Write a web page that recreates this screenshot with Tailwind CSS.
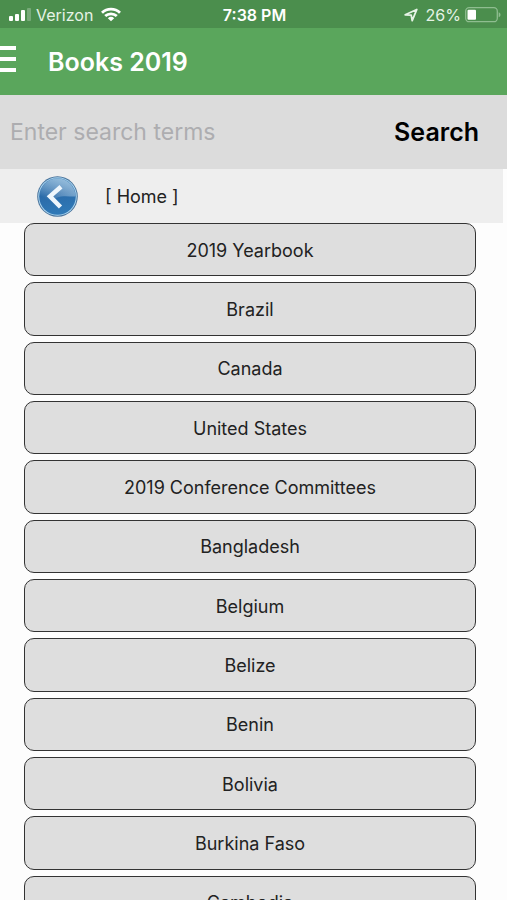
<!DOCTYPE html>
<html lang="en">
<head>
<meta charset="utf-8">
<meta name="viewport" content="width=device-width, initial-scale=1">
<title>Books 2019</title>
<script src="https://cdn.jsdelivr.net/npm/@tailwindcss/browser@4"></script>
</head>
<body class="flex h-screen flex-col overflow-hidden bg-[#fdfdfd] font-[Inter,'Liberation_Sans',sans-serif] text-[#222]">
  <div class="grid h-7 shrink-0 grid-cols-[1fr_auto_1fr] items-center bg-[#4b8e4d] pt-0.5 pl-2 pr-1.5 text-base text-[#e6f3e6]">
    <div class="flex items-center gap-1">
      <svg class="h-3.5 w-6" viewBox="0 0 24 14" fill="#fff" aria-label="Signal strength">
        <rect x="1" y="8" width="4" height="5" rx="1"/>
        <rect x="7" y="6" width="4" height="7" rx="1"/>
        <rect x="13" y="2" width="4" height="11" rx="1"/>
        <rect x="19" y="0" width="4" height="13" rx="1" opacity=".25"/>
      </svg>
      <span>Verizon</span>
      <svg class="ml-1 h-4 w-5" viewBox="0 0 20 16" fill="none" stroke="#fff" stroke-width="2.8" aria-label="Wi-Fi">
        <path d="M1 5.700a13 13 0 0 1 18 0"/>
        <path d="M4.200 9.100a8.400 8.400 0 0 1 11.600 0"/>
        <path d="M10 14.300 6.800 11.200a4.800 4.800 0 0 1 6.400 0z" fill="#fff" stroke="none"/>
      </svg>
    </div>
    <span class="font-semibold text-white">7:38 PM</span>
    <div class="flex items-center justify-end gap-1">
      <svg class="mr-1 h-3.5 w-3.5" viewBox="0 0 14 14" fill="none" stroke="#e6f3e6" stroke-width="1.8" stroke-linejoin="round" aria-label="Location">
        <path d="M1.200 6.800 12.800 1.500 8.200 12.600 7.200 7.200z"/>
      </svg>
      <span>26%</span>
      <svg class="h-4 w-9" viewBox="0 0 36 16" aria-label="Battery">
        <rect x=".7" y=".7" width="31.600" height="14" rx="3.500" fill="none" stroke="#8fbd90" stroke-width="1.300"/>
        <rect x="2.500" y="2.700" width="8.500" height="10" rx="1" fill="#fff"/>
        <path d="M33.700 5.200c2.400.700 2.400 4.300 0 5z" fill="#8fbd90"/>
      </svg>
    </div>
  </div>

  <header class="flex h-[67px] shrink-0 items-center gap-8 bg-[#5aa65c] pt-0.5 text-white">
    <button type="button" class="w-4" aria-label="Menu">
      <svg class="-mt-2 h-[27px] w-4" viewBox="0 0 16 27" fill="#fff">
        <path d="M0 1h16v4H0zM0 12h16v4H0zM0 23h16v4H0z"/>
      </svg>
    </button>
    <h1 class="text-[25px] font-semibold">Books 2019</h1>
  </header>

  <form class="flex h-[74px] shrink-0 items-center bg-[#dcdcdc] pl-2.5 pr-7 pt-0.5">
    <input type="search" aria-label="Search terms" placeholder="Enter search terms" class="min-w-0 flex-1 bg-transparent pb-0.5 text-[23px] outline-none placeholder:text-[#adadb0]">
    <button type="submit" class="text-[25px] font-semibold text-black">Search</button>
  </form>

  <nav class="mr-1 flex h-[54px] shrink-0 items-center gap-[27px] bg-[#eee] pl-9 pt-0.5" aria-label="Breadcrumb">
    <button type="button" aria-label="Back">
      <svg class="h-[42px] w-[42px]" viewBox="0 0 42 42">
        <defs>
          <linearGradient id="disc" x1="0" y1="0" x2="0.2" y2="1">
            <stop offset="0" stop-color="#4a88bc"/>
            <stop offset=".5" stop-color="#2b6ba9"/>
            <stop offset="1" stop-color="#2f78b6"/>
          </linearGradient>
          <linearGradient id="shine" x1="0.1" y1="0.9" x2="0.9" y2="0.1">
            <stop offset="0" stop-color="#fff" stop-opacity="0"/>
            <stop offset="1" stop-color="#c8e4f5" stop-opacity=".65"/>
          </linearGradient>
        </defs>
        <circle cx="21.500" cy="20.500" r="20.300" fill="#47729b"/>
        <circle cx="21.500" cy="20.500" r="19.300" fill="#a9d3ee"/>
        <circle cx="21.500" cy="20.500" r="18.300" fill="url(#disc)"/>
        <path d="M3.500 18C6 8 13 2.500 21.500 2.500a18 18 0 0 1 18 18C34 21 28 19 20 22S8 24 3.500 18z" fill="url(#shine)"/>
        <path d="M25 10.800 14 20.300 24.500 31" fill="none" stroke="#eef6fc" stroke-width="4.500"/>
      </svg>
    </button>
    <a href="#" class="text-lg">[ Home ]</a>
  </nav>

  <main class="min-h-0 flex-1 overflow-y-auto pl-6 pr-[31px] [scrollbar-width:none]">
    <div class="grid min-h-[706px] auto-rows-fr gap-1.5 text-lg *:rounded-[10px] *:border *:border-[#333] *:bg-[#dedede] *:pt-2.5 *:pb-2">
      <button type="button">2019 Yearbook</button>
      <button type="button">Brazil</button>
      <button type="button">Canada</button>
      <button type="button">United States</button>
      <button type="button">2019 Conference Committees</button>
      <button type="button">Bangladesh</button>
      <button type="button">Belgium</button>
      <button type="button">Belize</button>
      <button type="button">Benin</button>
      <button type="button">Bolivia</button>
      <button type="button">Burkina Faso</button>
      <button type="button">Cambodia</button>
    </div>
  </main>
</body>
</html>
